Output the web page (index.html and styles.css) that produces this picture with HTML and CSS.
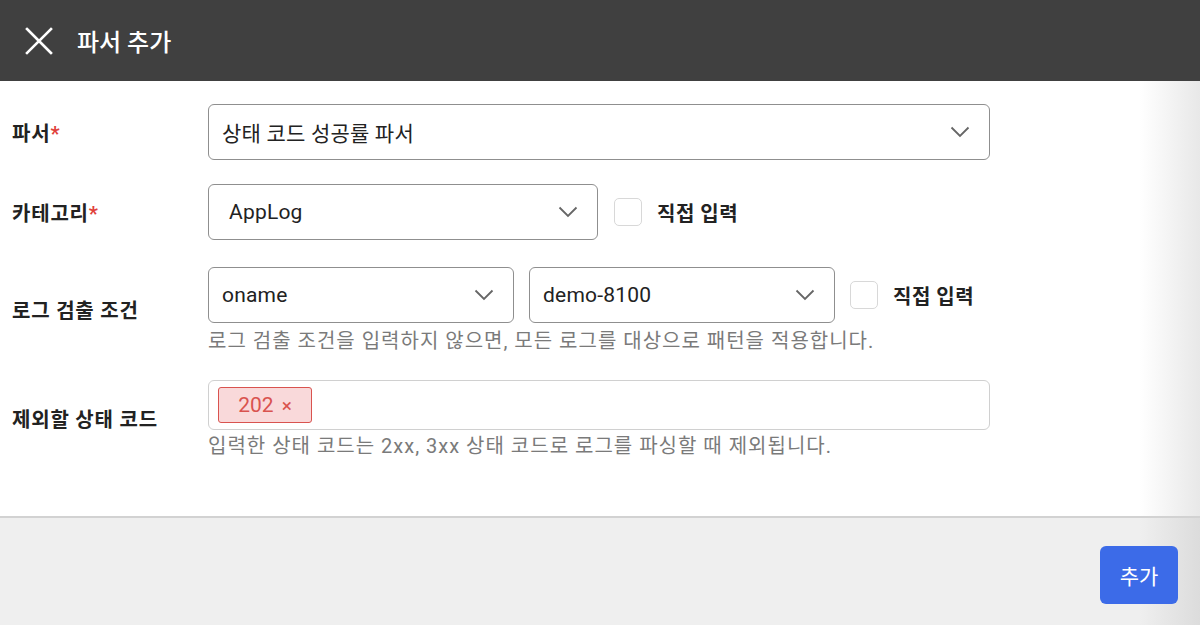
FILE: index.html
```html
<!DOCTYPE html>
<html lang="ko">
<head>
<meta charset="utf-8">
<link rel="stylesheet" href="styles.css">
</head>
<body>
<div class="dialog">
  <header class="topbar">
    <svg class="close" width="28" height="28" viewBox="0 0 28 28"><path d="M2 2 L26 26 M26 2 L2 26" stroke="#fff" stroke-width="2.6" fill="none" stroke-linecap="square"/></svg>
    <h1 class="title">파서 추가</h1>
  </header>
  <main class="content">
    <div class="row row-parser">
      <div class="label">파서<span class="req">*</span></div>
      <div class="field">
        <div class="select select-wide"><span>상태 코드 성공률 파서</span><svg class="chev" width="20" height="12" viewBox="0 0 20 12"><path d="M1.5 1.5 L10 10 L18.5 1.5" stroke="#666" stroke-width="1.8" fill="none"/></svg></div>
      </div>
    </div>
    <div class="row row-cat">
      <div class="label">카테고리<span class="req">*</span></div>
      <div class="field-row">
        <div class="select select-cat"><span>AppLog</span><svg class="chev" width="20" height="12" viewBox="0 0 20 12"><path d="M1.5 1.5 L10 10 L18.5 1.5" stroke="#666" stroke-width="1.8" fill="none"/></svg></div>
        <label class="check"><span class="box"></span><span class="check-text">직접 입력</span></label>
      </div>
    </div>
    <div class="row row-log">
      <div class="label">로그 검출 조건</div>
      <div class="field">
        <div class="field-row">
          <div class="select select-half"><span>oname</span><svg class="chev" width="20" height="12" viewBox="0 0 20 12"><path d="M1.5 1.5 L10 10 L18.5 1.5" stroke="#666" stroke-width="1.8" fill="none"/></svg></div>
          <div class="select select-half"><span>demo-8100</span><svg class="chev" width="20" height="12" viewBox="0 0 20 12"><path d="M1.5 1.5 L10 10 L18.5 1.5" stroke="#666" stroke-width="1.8" fill="none"/></svg></div>
          <label class="check"><span class="box"></span><span class="check-text">직접 입력</span></label>
        </div>
        <p class="help">로그 검출 조건을 입력하지 않으면, 모든 로그를 대상으로 패턴을 적용합니다.</p>
      </div>
    </div>
    <div class="row row-code">
      <div class="label">제외할 상태 코드</div>
      <div class="field">
        <div class="tags"><span class="tag">202 <span class="x">×</span></span></div>
        <p class="help help-tight">입력한 상태 코드는 2xx, 3xx 상태 코드로 로그를 파싱할 때 제외됩니다.</p>
      </div>
    </div>
  </main>
  <footer class="footer">
    <button class="add">추가</button>
  </footer>
</div>
</body>
</html>
```
FILE: styles.css
```css
* { box-sizing: border-box; }
html, body { margin: 0; padding: 0; }
body {
  font-family: Roboto, "Noto Sans CJK KR", sans-serif;
  color: #222;
  width: 1200px;
  height: 625px;
  overflow: hidden;
}
.dialog { display: flex; flex-direction: column; height: 625px; }
.topbar {
  height: 81px;
  flex: none;
  background: #404040;
  display: flex;
  align-items: center;
  padding-left: 25px;
}
.close { display: block; }
.title {
  margin: 0 0 0 24px;
  color: #fff;
  font-size: 24px;
  font-weight: 500;
}
.content {
  height: 437px;
  flex: none;
  background: linear-gradient(to right, #fff 1140px, #e8e8e8 1200px);
  padding: 23px 0 0 12px;
  border-bottom: 2px solid #d2d2d2;
}
.row { display: flex; }
.label {
  width: 196px;
  flex: none;
  font-size: 20px;
  font-weight: 700;
  letter-spacing: 0.8px;
  color: #222;
}
.req { color: #e0403a; }
.field { display: flex; flex-direction: column; }
.field-row { display: flex; align-items: center; }
.select {
  height: 56px;
  border: 1.5px solid #8f8f8f;
  border-radius: 6px;
  display: flex;
  align-items: center;
  justify-content: space-between;
  padding: 0 19px 0 13px;
  font-size: 21px;
  letter-spacing: 0.2px;
  color: #222;
  background: #fff;
}
.chev { display: block; }
.select-wide { width: 782px; }
.select-cat { width: 390px; padding-left: 20px; }
.select-half { width: 306px; margin-right: 15px; }
.check { display: flex; align-items: center; }
.box {
  width: 28px; height: 28px;
  border: 1.5px solid #d8d8d8;
  border-radius: 5px;
  background: #fff;
}
.check-text {
  margin-left: 15px;
  font-size: 20px;
  letter-spacing: 0.5px;
  font-weight: 700;
  color: #222;
}
.row-parser .label { padding-top: 14px; }
.row-cat { margin-top: 24px; }
.row-cat .label { padding-top: 14px; }
.row-cat .check { margin-left: 16px; }
.row-log { margin-top: 27px; }
.row-log .label { padding-top: 28px; }
.row-code { margin-top: 26px; }
.row-code .label { padding-top: 24px; }
.help {
  margin: 2px 0 0 0;
  font-size: 20px;
  letter-spacing: 1px;
  color: #7a7a7a;
}
.help-tight { margin-top: 0; }
.tags {
  width: 782px;
  height: 50px;
  border: 1.5px solid #d0d0d0;
  border-radius: 6px;
  display: flex;
  align-items: center;
  padding-left: 9px;
  background: #fff;
}
.tag {
  height: 36px;
  width: 94px;
  background: #f9d9da;
  border: 1.5px solid #d9534f;
  border-radius: 3px;
  color: #d9534f;
  font-size: 21px;
  display: flex;
  align-items: center;
  justify-content: center;
}
.tag .x { margin-left: 8px; font-size: 19px; }
.footer {
  flex: 1;
  background: linear-gradient(to right, #efefef 1140px, #dcdcdc 1200px);
  display: flex;
  justify-content: flex-end;
  align-items: flex-start;
  padding: 28px 22px 0 0;
}
.add {
  width: 78px;
  height: 58px;
  background: #3c6be8;
  border: none;
  border-radius: 6px;
  color: #fff;
  font-family: Roboto, "Noto Sans CJK KR", sans-serif;
  font-size: 21px;
}
```
